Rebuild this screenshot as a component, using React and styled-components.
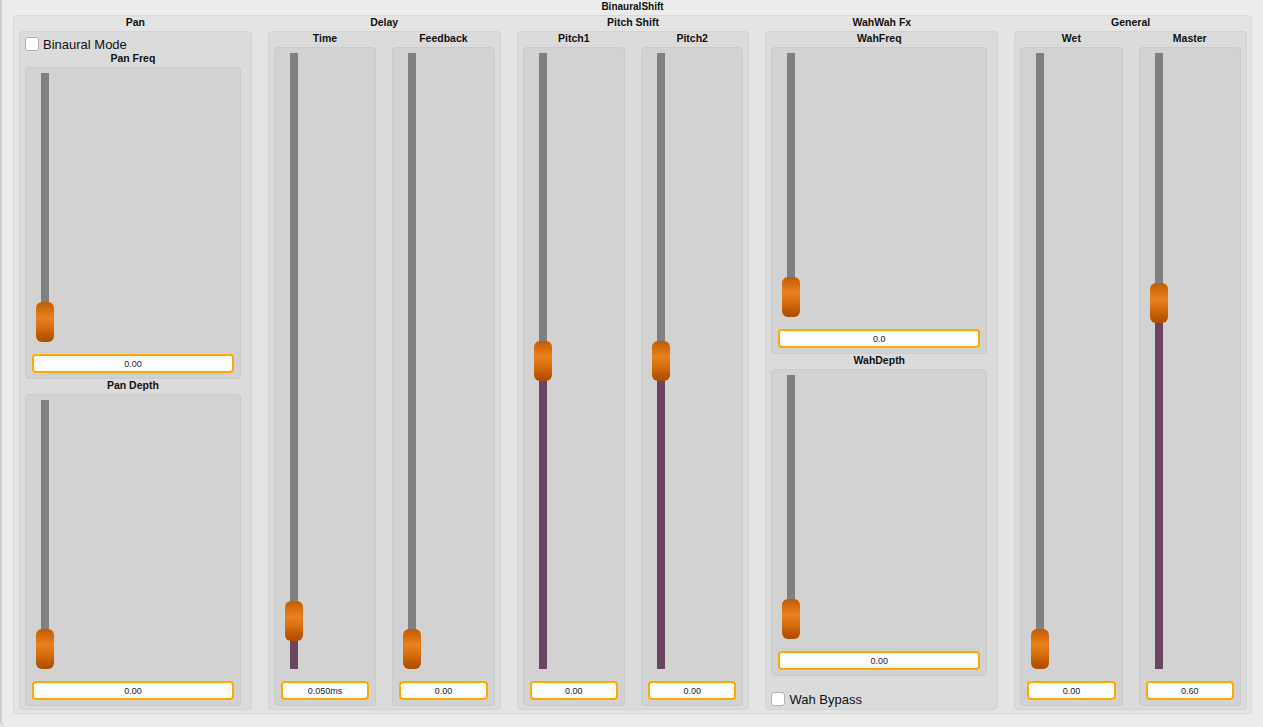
import React from 'react'
import styled, { createGlobalStyle } from 'styled-components'

const GlobalStyle = createGlobalStyle`
  html, body {
    margin: 0;
    padding: 0;
    background: #ececec;
    font-family: "Liberation Sans", Arial, sans-serif;
  }
`

const Window = styled.div`
  box-sizing: border-box;
  width: 1263px;
  height: 727px;
  border-left: 2px solid #cfcfcf;
  border-bottom-left-radius: 6px;
  display: flex;
  flex-direction: column;
`

const AppTitle = styled.div`
  height: 15px;
  line-height: 13px;
  text-align: center;
  font-size: 10px;
  font-weight: bold;
  color: #111;
`

const Panel = styled.div`
  box-sizing: border-box;
  margin-left: 11px;
  width: 1239px;
  height: 699px;
  background: #e4e4e4;
  border: 1px solid #d9d9d9;
  border-radius: 4px;
  padding: 0 4px 3px 5px;
  display: grid;
  grid-template-columns: repeat(5, 1fr);
  column-gap: 16px;
`

const Section = styled.div`
  display: flex;
  flex-direction: column;
  min-width: 0;
`

const SectionTitle = styled.div`
  height: 15px;
  line-height: 13px;
  text-align: center;
  font-size: 10.5px;
  font-weight: bold;
  color: #111;
`

const GroupBox = styled.div`
  box-sizing: border-box;
  flex: 1;
  background: #dbdbdb;
  border: 1px solid #d3d3d3;
  border-radius: 4px;
  padding: ${p => (p.$stack ? `0 10px ${p.$pb ?? 3}px 5px` : '0 5px 3px 5px')};
  display: ${p => (p.$stack ? 'flex' : 'grid')};
  flex-direction: column;
  grid-template-columns: 1fr 1fr;
  column-gap: 16px;
  min-height: 0;
`

const Column = styled.div`
  flex: 1;
  display: flex;
  flex-direction: column;
  min-width: 0;
  min-height: 0;
`

const Label = styled.div`
  height: 15px;
  line-height: 13px;
  text-align: center;
  font-size: 10.5px;
  font-weight: bold;
  color: #111;
`

const Frame = styled.div`
  box-sizing: border-box;
  flex: 1;
  background: #d2d2d2;
  border: 1px solid #cbcbcb;
  border-radius: 4px;
  padding: 5px 6px 5px 6px;
  display: flex;
  flex-direction: column;
  min-height: 0;
`

const SliderBody = styled.div`
  position: relative;
  flex: 1;
  width: 18px;
  margin-left: 4px;
`

const Track = styled.div`
  position: absolute;
  left: 5px;
  top: 0;
  bottom: 0;
  width: 8px;
  background: linear-gradient(
    to bottom,
    #808080 0,
    #808080 ${p => p.$stop},
    #6b4560 ${p => p.$stop},
    #6b4560 100%
  );
`

const Handle = styled.div`
  position: absolute;
  left: 0;
  width: 18px;
  height: 40px;
  top: ${p => p.$top};
  border-radius: 6px;
  background: linear-gradient(
    to bottom,
    #c25c00 0%,
    #d56d0e 18%,
    #e8811f 40%,
    #d96f10 62%,
    #c05a02 82%,
    #ad4d00 100%
  );
`

const ValueField = styled.input`
  box-sizing: border-box;
  margin-top: 12px;
  height: 19px;
  width: 100%;
  border: 2px solid #ffa800;
  border-radius: 4px;
  background: #fff;
  text-align: center;
  font-family: "Liberation Sans", Arial, sans-serif;
  font-size: 9px;
  color: #222;
  padding: 0;
  outline: none;
`

const CheckRow = styled.label`
  display: flex;
  align-items: flex-end;
  gap: 4px;
  height: ${p => p.$h}px;
  padding-bottom: ${p => p.$pb}px;
  box-sizing: border-box;
  font-size: 13px;
  color: #111;
  line-height: 13px;
  flex: none;
`

const Box = styled.span`
  display: inline-block;
  box-sizing: border-box;
  width: 14px;
  height: 14px;
  background: #fff;
  border: 1px solid #b3b3b3;
  border-radius: 3px;
`

function Slider({ label, value, text }) {
  const pos = `calc((100% - 40px) * ${1 - value})`
  const stop = `calc((100% - 40px) * ${1 - value} + 40px)`
  return (
    <Column>
      <Label>{label}</Label>
      <Frame>
        <SliderBody>
          <Track $stop={stop} />
          <Handle $top={pos} />
        </SliderBody>
        <ValueField readOnly value={text} />
      </Frame>
    </Column>
  )
}

function Check({ label, h, pb }) {
  return (
    <CheckRow $h={h} $pb={pb}>
      <Box />
      <span>{label}</span>
    </CheckRow>
  )
}

function App() {
  return (
    <Window>
      <GlobalStyle />
      <AppTitle>BinauralShift</AppTitle>
      <Panel>
        <Section>
          <SectionTitle>Pan</SectionTitle>
          <GroupBox $stack>
            <Check label="Binaural Mode" h={20} pb={1} />
            <Slider label="Pan Freq" value={0} text="0.00" />
            <Slider label="Pan Depth" value={0} text="0.00" />
          </GroupBox>
        </Section>
        <Section>
          <SectionTitle>Delay</SectionTitle>
          <GroupBox>
            <Slider label="Time" value={0.049} text="0.050ms" />
            <Slider label="Feedback" value={0} text="0.00" />
          </GroupBox>
        </Section>
        <Section>
          <SectionTitle>Pitch Shift</SectionTitle>
          <GroupBox>
            <Slider label="Pitch1" value={0.5} text="0.00" />
            <Slider label="Pitch2" value={0.5} text="0.00" />
          </GroupBox>
        </Section>
        <Section>
          <SectionTitle>WahWah Fx</SectionTitle>
          <GroupBox $stack $pb={0}>
            <Slider label="WahFreq" value={0} text="0.0" />
            <Slider label="WahDepth" value={0} text="0.00" />
            <Check label="Wah Bypass" h={33} pb={3} />
          </GroupBox>
        </Section>
        <Section>
          <SectionTitle>General</SectionTitle>
          <GroupBox>
            <Slider label="Wet" value={0} text="0.00" />
            <Slider label="Master" value={0.6} text="0.60" />
          </GroupBox>
        </Section>
      </Panel>
    </Window>
  )
}

export default App
